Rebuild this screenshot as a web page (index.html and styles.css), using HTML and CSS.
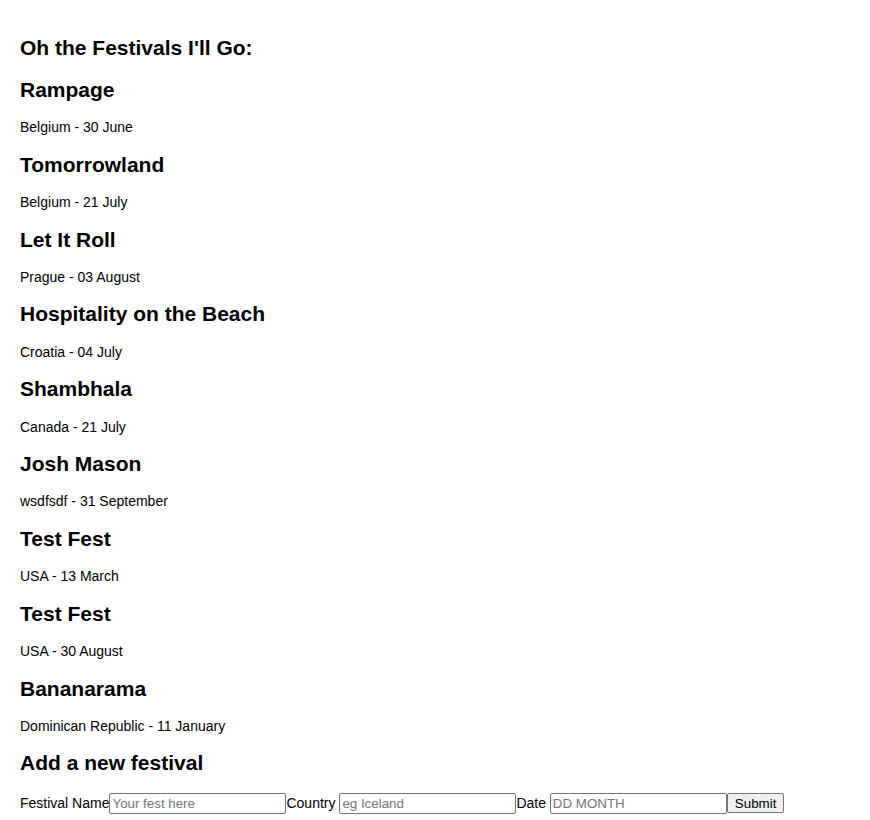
FILE: index.html
```html
<!DOCTYPE html>
<html>
<head>
<meta charset="utf-8">
<link rel="stylesheet" href="styles.css">
</head>
<body>
<div class="app">
  <h2 class="title">Oh the Festivals I'll Go:</h2>
  <div class="list">
    <div class="fest"><h2>Rampage</h2><p>Belgium - 30 June</p></div>
    <div class="fest"><h2>Tomorrowland</h2><p>Belgium - 21 July</p></div>
    <div class="fest"><h2>Let It Roll</h2><p>Prague - 03 August</p></div>
    <div class="fest"><h2>Hospitality on the Beach</h2><p>Croatia - 04 July</p></div>
    <div class="fest"><h2>Shambhala</h2><p>Canada - 21 July</p></div>
    <div class="fest"><h2>Josh Mason</h2><p>wsdfsdf - 31 September</p></div>
    <div class="fest"><h2>Test Fest</h2><p>USA - 13 March</p></div>
    <div class="fest"><h2>Test Fest</h2><p>USA - 30 August</p></div>
    <div class="fest"><h2>Bananarama</h2><p>Dominican Republic - 11 January</p></div>
  </div>
  <h2>Add a new festival</h2>
  <form class="form"><label>Festival Name</label><input type="text" placeholder="Your fest here"><label>Country </label><input type="text" placeholder="eg Iceland"><label>Date </label><input type="text" placeholder="DD MONTH"><button type="button">Submit</button></form>
</div>
</body>
</html>
```
FILE: styles.css
```css
body {
  margin: 8px;
  font-family: "Liberation Sans", Arial, sans-serif;
  font-size: 14px;
  color: #000;
}
.app {
  padding: 11px 12px 10px;
}
h2 {
  font-size: 21px;
  margin: 17.43px 0;
}
p {
  margin: 14px 0;
}
.form label {
  font-size: 14px;
  white-space: pre;
}
.form input {
  box-sizing: border-box;
  width: 177px;
  height: 21px;
  padding: 1px 2px;
  border: 1px solid #767676;
  border-radius: 2px;
  font-family: "Liberation Sans", Arial, sans-serif;
  font-size: 13.333px;
  vertical-align: baseline;
}
.form input::placeholder {
  color: #757575;
}
.form button {
  box-sizing: border-box;
  height: 20px;
  padding: 1px 7px;
  border: 1px solid #767676;
  border-radius: 2px;
  background: #efefef;
  font-family: "Liberation Sans", Arial, sans-serif;
  font-size: 13.333px;
  color: #000;
}
```
